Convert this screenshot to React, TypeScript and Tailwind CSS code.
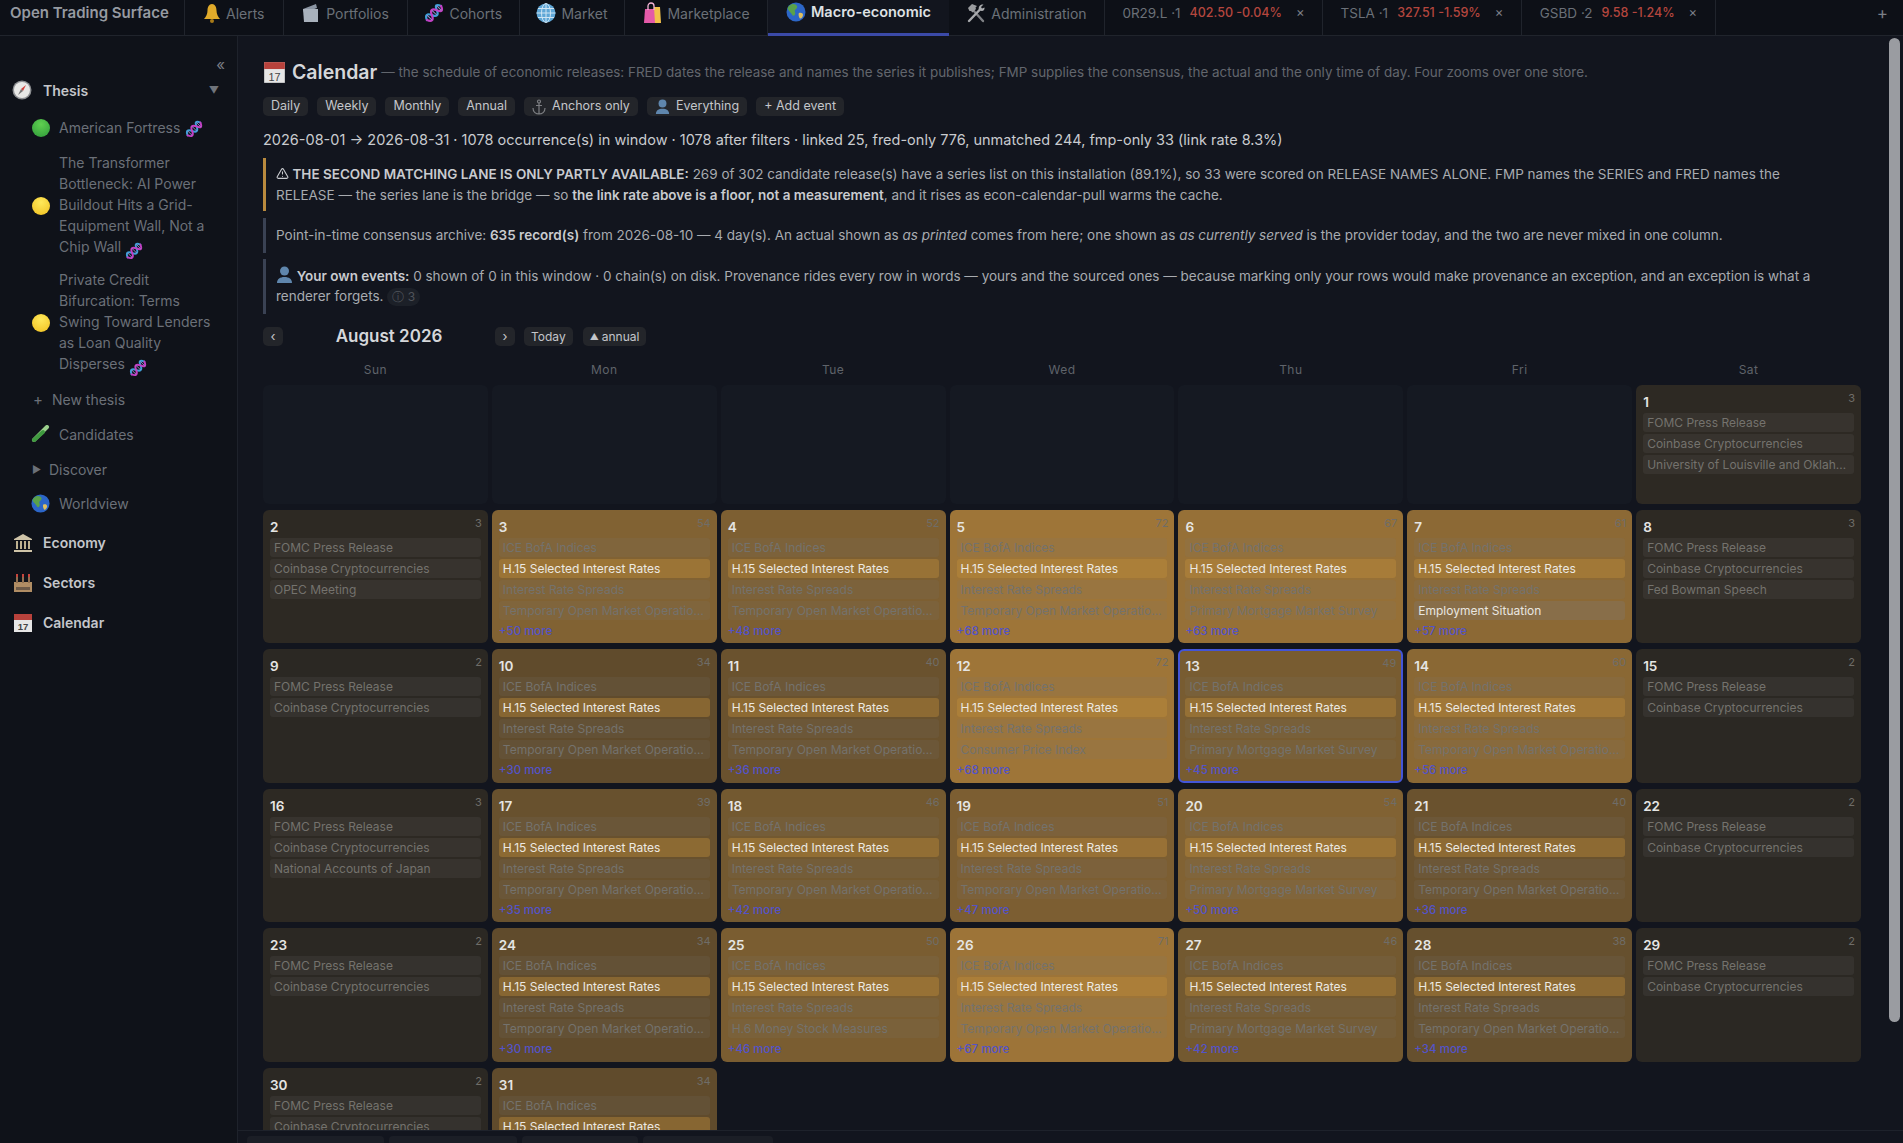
import React from "react";
import { TriangleAlert } from "lucide-react";

const Dna = ({ s = 18 }: { s?: number }) => (
  <svg width={s} height={s} viewBox="0 0 20 20" className="shrink-0 inline-block">
    <g transform="rotate(-45 10 10)" fill="none" strokeWidth="2.200" strokeLinecap="round">
      <path d="M0 10 C2 5 5 5 7 10 S12 15 14 10 S18 5 20 10" stroke="#3f9fd8" />
      <path d="M0 10 C2 15 5 15 7 10 S12 5 14 10 S18 15 20 10" stroke="#c23fc4" />
      <path d="M3.500 7v6M10.500 7v6M17 7v6" stroke="#9a8ad0" strokeWidth="1" />
    </g>
  </svg>
);

const Dot = ({ c, hi }: { c: string; hi: string }) => (
  <span className="shrink-0 w-[18px] h-[18px] rounded-full" style={{ background: `radial-gradient(circle at 50% 30%, ${hi}, ${c})` }} />
);

const Bell = () => (
  <svg width="18" height="20" viewBox="0 0 18 20" className="shrink-0">
    <path d="M9 1c3 0 4.500 3 4.500 6.500S15 14 17 16H1c2-2 3.500-5 3.500-8.500S6 1 9 1z" fill="#e0aa2a" />
    <circle cx="9" cy="18" r="2" fill="#a87a18" />
  </svg>
);
const Folder = () => (
  <svg width="20" height="20" viewBox="0 0 20 20" className="shrink-0">
    <path d="M2 6l13-5 1 4-13 5z" fill="#8b95a3" />
    <path d="M2 6h15v13H3z" fill="#a9b2bd" />
  </svg>
);
const GlobeNet = () => (
  <svg width="20" height="20" viewBox="0 0 20 20" className="shrink-0">
    <circle cx="10" cy="10" r="9.500" fill="#5ea6d6" />
    <g fill="none" stroke="#cfe5f4" strokeWidth="1">
      <ellipse cx="10" cy="10" rx="4.500" ry="9.500" />
      <path d="M10 .5v19M.5 10h19M2 5.500h16M2 14.500h16" />
    </g>
  </svg>
);
const Bags = () => (
  <svg width="20" height="22" viewBox="0 0 20 22" className="shrink-0">
    <path d="M3 7h11l1 14H2z" fill="#e45aa8" />
    <path d="M12 5h6l1 16h-6z" fill="#f2c14a" />
    <path d="M6 8V4a3 3 0 0 1 6 0v4" fill="none" stroke="#f6b6d8" strokeWidth="1.300" />
  </svg>
);
const Earth = ({ s = 20 }: { s?: number }) => (
  <svg width={s} height={s} viewBox="0 0 20 20" className="shrink-0">
    <circle cx="10" cy="10" r="9.500" fill="#2c66c8" />
    <path d="M5 2.500c3-1 5 0 6 1.500s-1 3-2 4 1 3 0 4.500-2 2-3 0-3-3-4-5 1-4 3-5z" fill="#5aa24a" />
    <path d="M13 11c2-.5 4 0 4 2s-2 4-3 3.500-2-4.500-1-5.500z" fill="#e0c060" />
  </svg>
);
const Tools = () => (
  <svg width="20" height="20" viewBox="0 0 20 20" className="shrink-0">
    <path d="M6.500 6.500L17 18" stroke="#7f8185" strokeWidth="2.400" strokeLinecap="round" />
    <path d="M2 5l4-4 5 2-1.500 1.500L10 6 6.500 9.500 5 8 3.500 8z" fill="#9a9c9f" />
    <path d="M3 18L13.500 7" stroke="#a9abae" strokeWidth="2.400" strokeLinecap="round" />
    <path d="M13 7c-1-3 1-6 4.500-5.500L15 4l1 1.500 2.500-1C19 8 16 9 13 7z" fill="#a9abae" />
  </svg>
);
const Compass = () => (
  <svg width="20" height="20" viewBox="0 0 20 20" className="shrink-0">
    <circle cx="10" cy="10" r="9.500" fill="#8d8f92" />
    <circle cx="10" cy="10" r="8" fill="#e8e8e6" />
    <path d="M14 5l-3 6-2-2z" fill="#cf3f3a" />
    <path d="M6 15l3-6 2 2z" fill="#777" />
  </svg>
);
const Tube = () => (
  <svg width="19" height="19" viewBox="0 0 19 19" className="shrink-0">
    <path d="M16 2L3 15" stroke="#9bd08c" strokeWidth="4" strokeLinecap="round" />
    <path d="M12 7L3 15" stroke="#3f9a3f" strokeWidth="4" strokeLinecap="round" />
  </svg>
);
const Bank = () => (
  <svg width="20" height="20" viewBox="0 0 20 20" className="shrink-0">
    <path d="M10 1l9 5v1H1V6z" fill="#cfc4a8" />
    <path d="M3 8h2v8H3zM7 8h2v8H7zM11 8h2v8h-2zM15 8h2v8h-2z" fill="#bdb190" />
    <path d="M1 17h18v2H1z" fill="#cfc4a8" />
  </svg>
);
const Factory = () => (
  <svg width="20" height="20" viewBox="0 0 20 20" className="shrink-0">
    <path d="M1 9h18v10H1z" fill="#b08d64" />
    <path d="M3 3h2v7H3zM9 3h2v7H9zM15 3h2v7h-2z" fill="#8f6f50" />
    <path d="M3 1h2v3H3zM9 1h2v3H9zM15 1h2v3h-2z" fill="#c8443c" />
    <path d="M3 14h14v3H3z" fill="#6d5a48" />
  </svg>
);
const Cal = ({ s = 20 }: { s?: number }) => (
  <svg width={s} height={s} viewBox="0 0 20 20" className="shrink-0">
    <path d="M1 1h18v18H1z" fill="#e6e6e6" />
    <path d="M1 1h18v6H1z" fill="#b8423c" />
    <text x="10" y="17" textAnchor="middle" fontSize="9.500" fill="#444" fontFamily="Liberation Sans, sans-serif">17</text>
  </svg>
);
const Bust = ({ s = 17 }: { s?: number }) => (
  <svg width={s} height={s} viewBox="0 0 17 17" className="inline-block shrink-0 align-[-2px]">
    <circle cx="8.500" cy="5" r="4.500" fill="#5f86ad" />
    <path d="M1 17c0-4 3-6 7.500-6s7.500 2 7.500 6z" fill="#5f86ad" />
  </svg>
);
const Anchor = () => (
  <svg width="14" height="16" viewBox="0 0 14 16" className="shrink-0">
    <g fill="none" stroke="#7d7f83" strokeWidth="1.200">
      <circle cx="7" cy="2.500" r="1.500" />
      <path d="M7 4v11M4 6.500h6M1 9c0 4 3 6 6 6s6-2 6-6" />
    </g>
  </svg>
);

const tabs = [
  { label: "Alerts", icon: <Bell />, w: "w-[98.5px]" },
  { label: "Portfolios", icon: <Folder />, w: "w-[124px]" },
  { label: "Cohorts", icon: <Dna s={20} />, w: "w-[112.5px]" },
  { label: "Market", icon: <GlobeNet />, w: "w-[105px]" },
  { label: "Marketplace", icon: <Bags />, w: "w-[143px]" },
];
const tickers = [
  { s: "0R29.L ·1", v: "402.50 -0.04%", w: "w-[218px]" },
  { s: "TSLA ·1", v: "327.51 -1.59%", w: "w-[199px]" },
  { s: "GSBD ·2", v: "9.58 -1.24%", w: "w-[194px]" },
];

const Pill = ({ children, cls = "px-[8px] text-[12.5px] gap-[6px]" }: { children: React.ReactNode; cls?: string }) => (
  <span className={`inline-flex items-center h-[19px] rounded-[5px] bg-[#23252a] text-[#c4c6ca] whitespace-nowrap ${cls}`}>{children}</span>
);

const T = "Temporary Open Market Operations";
const P = "Primary Mortgage Market Survey";
const I = "ICE BofA Indices";
const H = "H.15 Selected Interest Rates";
const R = "Interest Rate Spreads";
const F = "FOMC Press Release";
const C = "Coinbase Cryptocurrencies";

type Day = { d: number; n: number; ev: string[]; today?: boolean };
const mk = (d: number, n: number, last: string, today = false): Day => ({ d, n, ev: [I, H, R, last], today });
const g = (d: number, n: number, ...rest: string[]): Day => ({ d, n, ev: [F, C, ...rest] });

const days: (Day | null)[] = [
  null, null, null, null, null, null, g(1, 3, "University of Louisville and Oklahoma State University"),
  g(2, 3, "OPEC Meeting"), mk(3, 54, T), mk(4, 52, T), mk(5, 72, T), mk(6, 67, P), mk(7, 61, "Employment Situation"), g(8, 3, "Fed Bowman Speech"),
  g(9, 2), mk(10, 34, T), mk(11, 40, T), mk(12, 72, "Consumer Price Index"), mk(13, 49, P, true), mk(14, 60, T), g(15, 2),
  g(16, 3, "National Accounts of Japan"), mk(17, 39, T), mk(18, 46, T), mk(19, 51, T), mk(20, 54, P), mk(21, 40, T), g(22, 2),
  g(23, 2), mk(24, 34, T), mk(25, 50, "H.6 Money Stock Measures"), mk(26, 71, T), mk(27, 46, P), mk(28, 38, T), g(29, 2),
  g(30, 2), mk(31, 34, T),
];

const heat = (n: number) => {
  const t = Math.min(1, n / 78);
  const a = [40, 38, 34];
  const b = [168, 124, 58];
  const c = a.map((v, i) => Math.round(v + (b[i] - v) * t));
  return `rgb(${c[0]},${c[1]},${c[2]})`;
};

const Chip = ({ text }: { text: string }) => {
  const isH = text === H;
  const bright = text === "Employment Situation";
  const cls = isH
    ? "bg-[rgba(190,140,60,0.42)] text-[#ece9e2]"
    : bright
    ? "bg-[rgba(125,125,125,0.28)] text-[#e8e6e0]"
    : "bg-[rgba(125,125,125,0.13)] text-[#74726d]";
  return <div className={`h-[19px] leading-[19px] rounded-[3px] px-[4px] text-[12px] truncate ${cls}`}>{text}</div>;
};

const Cell = ({ day }: { day: Day | null }) => {
  if (!day) return <div className="rounded-md bg-[#151922]" />;
  return (
    <div
      className={`relative min-w-0 rounded-md pb-[3px] ${day.today ? "border-2 border-[#4355d8] px-[5px] pt-[5px]" : "border border-transparent px-[6px] pt-[6px]"}`}
      style={{ background: heat(day.n) }}
    >
      <div className="h-[21px] text-[13.5px] leading-[21px] font-semibold text-[#e5e5e3]">{day.d}</div>
      <span className="absolute right-[5px] top-[4px] text-[11px] text-[#6f6d68]">{day.n}</span>
      <div className="flex flex-col gap-[2px]">
        {day.ev.map((e, i) => (
          <Chip key={i} text={e} />
        ))}
      </div>
      {day.n > 4 && <div className="mt-[1px] h-[21px] leading-[21px] text-[11.5px] font-medium text-[#5353c8]">+{day.n - 4} more</div>}
    </div>
  );
};

export default function App() {
  return (
    <div className="h-screen w-full overflow-hidden flex flex-col bg-[#12151e] font-['Inter','Liberation_Sans',sans-serif] text-[#c9cbcf]">
      {/* top bar */}
      <header className="h-[36px] shrink-0 flex bg-[#0d1017] border-b border-[#20242c] text-[14px] text-[#6b7078]">
        <div className="w-[185px] pl-[10px] pb-[9px] flex items-center text-[15px] font-semibold text-[#969aa1] border-r border-[#20242c] whitespace-nowrap">Open Trading Surface</div>
        {tabs.map((t) => (
          <div key={t.label} className={`${t.w} pb-[9px] flex items-center justify-center gap-[5px] border-r border-[#20242c] whitespace-nowrap`}>
            {t.icon}
            {t.label}
          </div>
        ))}
        <div className="w-[181px] h-[36px] flex items-center justify-center gap-[5px] pb-[9px] border-b-[3px] border-[#3b4aa8] bg-[#12151e] text-[14.5px] font-semibold text-[#dfe1e4] whitespace-nowrap">
          <Earth />
          Macro-economic
        </div>
        <div className="w-[156px] pb-[9px] flex items-center justify-center gap-[5px] border-r border-[#20242c] whitespace-nowrap">
          <Tools />
          Administration
        </div>
        {tickers.map((t) => (
          <div key={t.s} className={`${t.w} pb-[9px] flex items-center justify-center border-r border-[#20242c] whitespace-nowrap text-[13.5px]`}>
            <span>{t.s}</span>
            <span className="ml-[9px] text-[12.5px] font-medium text-[#b4463e]">{t.v}</span>
            <span className="ml-[14px] text-[13px] text-[#7b7f86]">×</span>
          </div>
        ))}
        <div className="flex-1 flex items-center justify-end pr-[15px] pb-[8px] text-[17px] text-[#7b7f86]">+</div>
      </header>

      <div className="flex-1 min-h-0 flex">
        {/* sidebar */}
        <aside className="w-[238px] shrink-0 bg-[#0f1219] border-r border-[#1e222b] text-[14px] text-[#6b7078] relative">
          <div className="h-[43px] flex items-end justify-end pr-[12px] pb-[3px] text-[15px] text-[#7a7e85]">«</div>
          <div className="h-[22px] flex items-center pl-[12px] pr-[18px] font-semibold text-[#c4c6ca]">
            <Compass />
            <span className="ml-[11px] flex-1">Thesis</span>
            <span className="text-[10px] text-[#70747b]">▼</span>
          </div>
          <div className="mt-[16px] flex items-center h-[21px] pl-[32px] whitespace-nowrap">
            <Dot c="#2f9a3a" hi="#5fd050" />
            <span className="ml-[9px]">American Fortress</span>
            <span className="ml-[5px]"><Dna /></span>
          </div>
          <div className="mt-[14px] flex items-center pl-[32px] pr-[24px]">
            <Dot c="#f0c020" hi="#ffe95a" />
            <span className="ml-[9px] leading-[21px] w-[152px]">
              The Transformer Bottleneck: AI Power Buildout Hits a Grid-Equipment Wall, Not a Chip Wall{" "}
              <span className="inline-block align-[-3px]"><Dna /></span>
            </span>
          </div>
          <div className="mt-[9px] flex items-center pl-[32px] pr-[24px]">
            <Dot c="#f0c020" hi="#ffe95a" />
            <span className="ml-[9px] leading-[21px] w-[152px]">
              Private Credit Bifurcation: Terms Swing Toward Lenders as Loan Quality Disperses{" "}
              <span className="inline-block align-[-3px]"><Dna /></span>
            </span>
          </div>
          <div className="mt-[12px] h-[21px] flex items-center pl-[32px]">
            <span className="w-[12px] text-center text-[15px]">+</span>
            <span className="ml-[8px]">New thesis</span>
          </div>
          <div className="mt-[14px] h-[21px] flex items-center pl-[31px]">
            <Tube />
            <span className="ml-[9px]">Candidates</span>
          </div>
          <div className="mt-[14px] h-[21px] flex items-center pl-[32px]">
            <span className="text-[10px] w-[17px]">▶</span>
            <span>Discover</span>
          </div>
          <div className="mt-[13px] h-[21px] flex items-center pl-[31px]">
            <Earth s={19} />
            <span className="ml-[9px]">Worldview</span>
          </div>
          {[
            { l: "Economy", i: <Bank /> },
            { l: "Sectors", i: <Factory /> },
            { l: "Calendar", i: <Cal /> },
          ].map((x, i) => (
            <div key={x.l} className={`${i === 0 ? "mt-[18px]" : "mt-[19px]"} h-[21px] flex items-center pl-[13px] font-semibold text-[#c4c6ca]`}>
              {x.i}
              <span className="ml-[10px]">{x.l}</span>
            </div>
          ))}
        </aside>

        {/* main */}
        <main className="relative flex-1 min-w-0 flex flex-col">
          <div className="flex-1 min-h-0 overflow-hidden pl-[25px] pr-[42px]">
            <div className="h-[21px]" />
            <div className="flex items-center h-[30px] whitespace-nowrap">
              <Cal s={23} />
              <span className="ml-[6px] text-[19.5px] leading-[30px] font-semibold text-[#d5d7da]">Calendar</span>
              <span className="ml-[4px] text-[13.45px] text-[#62666d]">— the schedule of economic releases: FRED dates the release and names the series it publishes; FMP supplies the consensus, the actual and the only time of day. Four zooms over one store.</span>
            </div>
            <div className="mt-[10px] flex gap-[9px]">
              <Pill>Daily</Pill>
              <Pill>Weekly</Pill>
              <Pill>Monthly</Pill>
              <Pill>Annual</Pill>
              <Pill><Anchor /> Anchors only</Pill>
              <Pill><Bust s={15} /> Everything</Pill>
              <Pill>+ Add event</Pill>
            </div>
            <div className="mt-[14px] text-[14.5px] leading-[20px] text-[#c9cbcf] whitespace-nowrap">2026-08-01 → 2026-08-31 · 1078 occurrence(s) in window · 1078 after filters · linked 25, fred-only 776, unmatched 244, fmp-only 33 (link rate 8.3%)</div>
            <div className="mt-[8px] mr-[24px] border-l-[3px] border-[#b98a3e] pl-[10px] py-[6px] text-[13.5px] leading-[20.5px] text-[#a8abb0]">
              <strong className="font-semibold text-[#c9cbcf]"><TriangleAlert size={13} className="inline-block align-[-1px]" /> THE SECOND MATCHING LANE IS ONLY PARTLY AVAILABLE:</strong> 269 of 302 candidate release(s) have a series list on this installation (89.1%), so 33 were scored on RELEASE NAMES ALONE. FMP names the SERIES and FRED names the RELEASE — the series lane is the bridge — so <strong className="font-semibold text-[#c9cbcf]">the link rate above is a floor, not a measurement</strong>, and it rises as econ-calendar-pull warms the cache.
            </div>
            <div className="mt-[7px] mr-[24px] border-l-[3px] border-[#3a4254] pl-[10px] py-[7px] text-[13.5px] leading-[20.5px] text-[#a8abb0]">
              Point-in-time consensus archive: <strong className="font-semibold text-[#c9cbcf]">635 record(s)</strong> from 2026-08-10 — 4 day(s). An actual shown as <em>as printed</em> comes from here; one shown as <em>as currently served</em> is the provider today, and the two are never mixed in one column.
            </div>
            <div className="mt-[6px] mr-[24px] border-l-[3px] border-[#3a4254] pl-[10px] py-[7px] text-[13.5px] leading-[20.5px] text-[#a8abb0]">
              <Bust /> <strong className="font-semibold text-[#c9cbcf]">Your own events:</strong> 0 shown of 0 in this window · 0 chain(s) on disk. Provenance rides every row in words — yours and the sourced ones — because marking only your rows would make provenance an exception, and an exception is what a renderer forgets.{" "}
              <span className="inline-block rounded-full bg-[#1c2028] px-[5px] text-[12px] leading-[18px] text-[#4f535a]">ⓘ 3</span>
            </div>
            <div className="mt-[12px] flex items-center h-[22px]">
              <Pill cls="w-[20px] justify-center text-[13px]">‹</Pill>
              <span className="w-[212px] text-center text-[17px] font-semibold text-[#d5d7da] whitespace-nowrap">August 2026</span>
              <Pill cls="w-[20px] justify-center text-[13px]">›</Pill>
              <Pill cls="ml-[9px] px-[7px] text-[12px]">Today</Pill>
              <Pill cls="ml-[10px] px-[7px] text-[12px] gap-[3px]"><span className="text-[9px]">▲</span> annual</Pill>
            </div>
            <div className="mt-[14px] grid grid-cols-7 gap-x-[4px] h-[16px] text-[12px] leading-[16px] tracking-[0.5px] text-center text-[#5f636a]">
              {["Sun", "Mon", "Tue", "Wed", "Thu", "Fri", "Sat"].map((d) => (
                <div key={d}>{d}</div>
              ))}
            </div>
            <div className="mt-[7px] grid grid-cols-7 gap-x-[4px] gap-y-[6px] grid-rows-[119px_repeat(5,133.5px)]">
              {days.map((d, i) => (
                <Cell key={i} day={d} />
              ))}
            </div>
          </div>
          <footer className="relative h-[13px] shrink-0 bg-[#12151e] border-t border-[#1e222b] overflow-hidden flex gap-[5px] pl-[9px] pt-[5px]">
            <span className="w-[137px] h-[20px] rounded bg-[#1b1e26]" />
            <span className="w-[128px] h-[20px] rounded bg-[#1b1e26]" />
            <span className="w-[116px] h-[20px] rounded bg-[#1b1e26]" />
            <span className="w-[130px] h-[20px] rounded bg-[#1b1e26]" />
          </footer>
          {/* scrollbar */}
          <div className="absolute right-[3px] top-[2px] w-[11px] h-[984px] rounded-full bg-[#9a9ca1]" />
        </main>
      </div>
    </div>
  );
}
